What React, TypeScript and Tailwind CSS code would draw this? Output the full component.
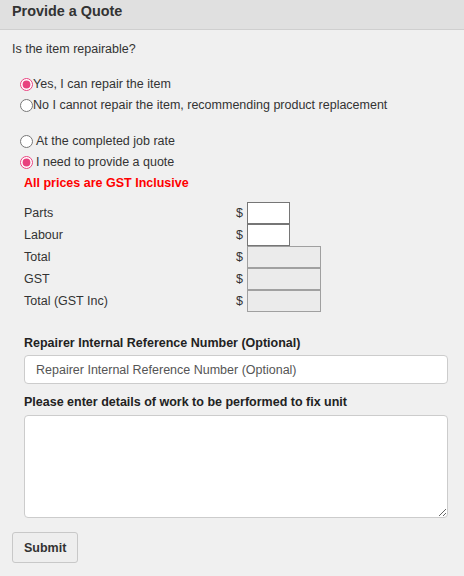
import { useState } from 'react';

const rows = [
  { label: 'Parts', editable: true },
  { label: 'Labour', editable: true },
  { label: 'Total', editable: false },
  { label: 'GST', editable: false },
  { label: 'Total (GST Inc)', editable: false },
];

export default function App() {
  const [repairable, setRepairable] = useState('yes');
  const [rate, setRate] = useState('quote');

  return (
    <div className="min-h-[576px] bg-[#f0f0f0] text-[12.5px] leading-[16px] text-[#333] font-['Liberation_Sans',Arial,sans-serif]">
      {/* Header */}
      <div className="h-[30px] bg-[#e0e0e0] border-b border-[#cfcfcf] px-3 pt-[3px]">
        <h2 className="text-[14.4px] leading-[17px] font-bold text-[#333]">Provide a Quote</h2>
      </div>

      <div className="pl-3 pr-4">
        <p className="pt-[11px]">Is the item repairable?</p>

        <div className="mt-[19px] ml-[8px] flex flex-col gap-[5px]">
          <label className="flex items-center h-[16px]">
            <input
              type="radio"
              name="repairable"
              checked={repairable === 'yes'}
              onChange={() => setRepairable('yes')}
              className="w-[13px] h-[13px] m-0 accent-[#e8417e]"
            />
            <span>Yes, I can repair the item</span>
          </label>
          <label className="flex items-center h-[16px]">
            <input
              type="radio"
              name="repairable"
              checked={repairable === 'no'}
              onChange={() => setRepairable('no')}
              className="w-[13px] h-[13px] m-0 accent-[#e8417e]"
            />
            <span>No I cannot repair the item, recommending product replacement</span>
          </label>
        </div>

        <div className="mt-[20px] ml-[8px] flex flex-col gap-[5px]">
          <label className="flex items-center h-[16px]">
            <input
              type="radio"
              name="rate"
              checked={rate === 'job'}
              onChange={() => setRate('job')}
              className="w-[13px] h-[13px] m-0 mr-[3px] accent-[#e8417e]"
            />
            <span>At the completed job rate</span>
          </label>
          <label className="flex items-center h-[16px]">
            <input
              type="radio"
              name="rate"
              checked={rate === 'quote'}
              onChange={() => setRate('quote')}
              className="w-[13px] h-[13px] m-0 mr-[3px] accent-[#e8417e]"
            />
            <span>I need to provide a quote</span>
          </label>
        </div>

        <p className="mt-[5px] ml-[12px] font-bold text-[#ff0000]">All prices are GST Inclusive</p>

        {/* Price table */}
        <div className="mt-[11px] ml-[12px] flex flex-col">
          {rows.map((r) => (
            <div key={r.label} className="flex items-center h-[22px]">
              <span className="w-[212px]">{r.label}</span>
              <span className="w-[11px]">$</span>
              <input
                type="text"
                readOnly={!r.editable}
                className={
                  r.editable
                    ? 'h-[22px] w-[43px] bg-white border border-[#767676] outline-none'
                    : 'h-[22px] w-[74px] bg-[#ebebeb] border border-[#a0a0a0] outline-none'
                }
              />
            </div>
          ))}
        </div>

        {/* Reference number */}
        <div className="mt-[23px] ml-[12px]">
          <label className="block font-bold text-[#222]">Repairer Internal Reference Number (Optional)</label>
          <input
            type="text"
            placeholder="Repairer Internal Reference Number (Optional)"
            className="mt-[4px] h-[29px] w-full bg-white border border-[#ccc] rounded-[4px] px-[11px] text-[12.5px] placeholder:text-[#555] outline-none"
          />
          <label className="block mt-[10px] font-bold text-[#222]">Please enter details of work to be performed to fix unit</label>
          <textarea className="mt-[5px] block h-[103px] w-full bg-white border border-[#ccc] rounded-[4px] outline-none resize-y" />
        </div>

        <button
          type="button"
          className="mt-[14px] h-[31px] px-[11px] bg-[#eee] border border-[#c8c8c8] rounded-[3px] font-bold text-[12.5px] text-[#333]"
        >
          Submit
        </button>
      </div>
    </div>
  );
}
